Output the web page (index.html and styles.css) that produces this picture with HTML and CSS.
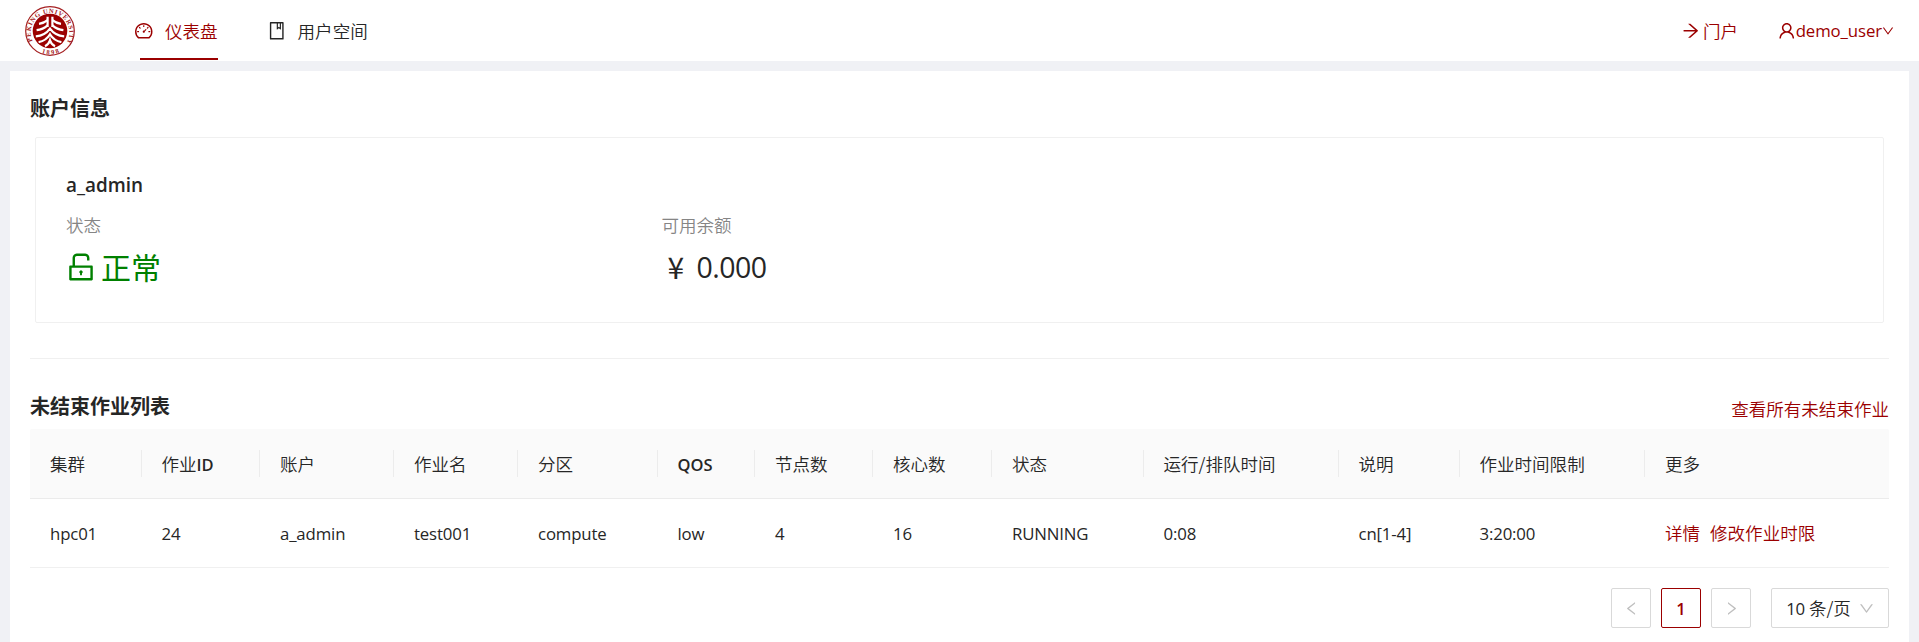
FILE: index.html
```html
<!DOCTYPE html>
<html lang="zh-CN">
<head>
<meta charset="utf-8">
<title>仪表盘</title>
<link rel="stylesheet" href="styles.css">
</head>
<body>
<header class="header">
  <svg class="logo" viewBox="0 0 50 50">
    <defs>
      <path id="ring-top" d="M7.5 35A19.4 19.4 0 1 1 42.5 35"/>
      <path id="ring-bottom" d="M13 45.2A23.6 23.6 0 0 0 37 45.2"/>
    </defs>
    <circle cx="25" cy="25" r="24.3" fill="#fff" stroke="#a52022" stroke-width="1.2"/>
    <circle cx="25" cy="25" r="17.3" fill="#9b0000"/>
    <text class="logo-text"><textPath href="#ring-top" textLength="80">PEKING UNIVERSITY</textPath></text>
    <text class="logo-text"><textPath href="#ring-bottom" startOffset="4" textLength="18">1898</textPath></text>
    <g fill="none" stroke="#fff" stroke-width="2.2">
      <path d="M22.6 10.8V21M27.4 10.8V21"/>
      <path d="M22.6 14.2Q19 17.2 14 17.8M22.6 19.4Q18 23.4 11.6 24.2M27.4 14.2Q31 17.2 36 17.8M27.4 19.4Q32 23.4 38.4 24.2"/>
      <path d="M10.8 30.4Q20 29.6 25 22.6Q30 29.6 39.2 30.4M13.6 36.2Q21.2 34.6 25 28.2Q28.8 34.6 36.4 36.2M20 40.2Q23.8 38.4 25 34.4Q26.2 38.4 30 40.2"/>
    </g>
  </svg>
  <nav class="nav">
    <a class="nav-item active"><svg class="icon" viewBox="64 64 896 896"><path d="M924.8 385.6a446.7 446.7 0 00-96-142.4 446.7 446.7 0 00-142.4-96C631.1 123.8 572.5 112 512 112s-119.1 11.8-174.4 35.2a446.7 446.7 0 00-142.4 96 446.7 446.7 0 00-96 142.4C75.8 440.9 64 499.5 64 560c0 132.7 58.3 257.7 159.9 343.1l1.7 1.4c5.8 4.8 13.1 7.5 20.6 7.5h531.7c7.5 0 14.8-2.7 20.6-7.5l1.7-1.4C901.7 817.7 960 692.7 960 560c0-60.5-11.9-119.1-35.2-174.4zM761.4 836H262.6A371.12 371.12 0 01140 560c0-99.4 38.7-192.8 109-263 70.3-70.3 163.7-109 263-109 99.4 0 192.8 38.7 263 109 70.3 70.3 109 163.7 109 263 0 105.6-44.5 205.5-122.6 276zM623.5 421.5a8.03 8.03 0 00-11.3 0L527.7 506c-18.7-5-39.4-.2-54.1 14.5a55.95 55.95 0 000 79.2 55.95 55.95 0 0079.2 0 55.87 55.87 0 0014.5-54.1l84.5-84.5c3.1-3.1 3.1-8.2 0-11.3l-28.3-28.3zM490 320h44c4.4 0 8-3.6 8-8v-80c0-4.4-3.6-8-8-8h-44c-4.4 0-8 3.6-8 8v80c0 4.4 3.6 8 8 8zm260 218v44c0 4.4 3.6 8 8 8h80c4.4 0 8-3.6 8-8v-44c0-4.4-3.6-8-8-8h-80c-4.4 0-8 3.6-8 8zm12.7-197.2l-31.1-31.1a8.03 8.03 0 00-11.3 0l-56.6 56.6a8.03 8.03 0 000 11.3l31.1 31.1c3.1 3.1 8.2 3.1 11.3 0l56.6-56.6c3.1-3.1 3.1-8.2 0-11.3zm-458.6-31.1a8.03 8.03 0 00-11.3 0l-31.1 31.1a8.03 8.03 0 000 11.3l56.6 56.6c3.1 3.1 8.2 3.1 11.3 0l31.1-31.1c3.1-3.1 3.1-8.2 0-11.3l-56.6-56.6zM262 530h-80c-4.4 0-8 3.6-8 8v44c0 4.4 3.6 8 8 8h80c4.4 0 8-3.6 8-8v-44c0-4.4-3.6-8-8-8z"/></svg><span>仪表盘</span></a>
    <a class="nav-item"><svg class="icon" viewBox="64 64 896 896"><path d="M832 64H192c-17.7 0-32 14.3-32 32v832c0 17.7 14.3 32 32 32h640c17.7 0 32-14.3 32-32V96c0-17.7-14.3-32-32-32zm-260 72h96v209.9L621.5 312 572 347.4V136zm220 752H232V136h280v296.9c0 3.3 1 6.6 3 9.3a15.9 15.9 0 0022.3 3.7l83.8-59.9 81.4 59.4c2.7 2 6 3.1 9.4 3.1 8.8 0 16-7.2 16-16V136h64v752z"/></svg><span>用户空间</span></a>
  </nav>
  <div class="header-right">
    <a class="portal"><svg class="icon" viewBox="64 64 896 896"><path d="M869 487.8L491.2 159.9c-2.9-2.5-6.6-3.9-10.5-3.9h-88.5c-7.4 0-10.8 9.2-5.2 14l350.2 304H152c-4.4 0-8 3.6-8 8v60c0 4.4 3.6 8 8 8h585.1L386.9 854c-5.6 4.9-2.2 14 5.2 14h91.5c1.9 0 3.8-.7 5.2-2L869 536.2a32.07 32.07 0 000-48.4z"/></svg><span>门户</span></a>
    <a class="user"><svg class="icon" viewBox="64 64 896 896"><path d="M858.5 763.6a374 374 0 00-80.6-119.5 375.63 375.63 0 00-119.5-80.6c-.4-.2-.8-.3-1.2-.5C719.5 518 760 444.7 760 362c0-137-111-248-248-248S264 225 264 362c0 82.7 40.5 156 102.8 201.1-.4.2-.8.3-1.2.5-44.8 18.9-85 46-119.5 80.6a375.63 375.63 0 00-80.6 119.5A371.7 371.7 0 00136 901.8a8 8 0 008 8.2h60c4.4 0 7.9-3.5 8-7.8 2-77.2 33-149.5 87.8-204.3 56.7-56.7 132-87.9 212.2-87.9s155.5 31.2 212.2 87.9C779 752.7 810 825 812 902.2c.1 4.4 3.6 7.8 8 7.8h60a8 8 0 008-8.2c-1-47.8-10.9-94.3-29.5-138.2zM512 534c-45.9 0-89.1-17.9-121.6-50.4S340 407.9 340 362c0-45.9 17.9-89.1 50.4-121.6S466.1 190 512 190s89.1 17.9 121.6 50.4S684 316.1 684 362c0 45.9-17.9 89.1-50.4 121.6S557.9 534 512 534z"/></svg><span class="user-name">demo_user</span><svg class="icon caret" viewBox="64 64 896 896"><path d="M884 256h-75c-5.1 0-9.9 2.5-12.9 6.6L512 654.2 227.9 262.6c-3-4.1-7.8-6.6-12.9-6.6h-75c-6.5 0-10.3 7.4-6.5 12.7l352.6 486.1c12.8 17.6 39 17.6 51.7 0l352.6-486.1c3.9-5.3.1-12.7-6.4-12.7z"/></svg></a>
  </div>
</header>
<main class="content">
  <h2 class="title">账户信息</h2>
  <section class="account-card">
    <h3 class="account-name">a_admin</h3>
    <div class="stats">
      <div class="stat">
        <div class="stat-label">状态</div>
        <div class="stat-value ok"><svg class="icon" viewBox="64 64 896 896"><path d="M832 464H332V240c0-30.9 25.1-56 56-56h248c30.9 0 56 25.1 56 56v68c0 4.4 3.6 8 8 8h56c4.4 0 8-3.6 8-8v-68c0-70.7-57.3-128-128-128H388c-70.7 0-128 57.3-128 128v224h-68c-17.7 0-32 14.3-32 32v384c0 17.7 14.3 32 32 32h640c17.7 0 32-14.3 32-32V496c0-17.7-14.3-32-32-32zm-40 376H232V536h560v304zM484 701v53c0 4.4 3.6 8 8 8h40c4.4 0 8-3.6 8-8v-53a48.01 48.01 0 10-56 0z"/></svg><span>正常</span></div>
      </div>
      <div class="stat">
        <div class="stat-label">可用余额</div>
        <div class="stat-value"><span class="yen">¥</span><span class="amount">0.000</span></div>
      </div>
    </div>
  </section>
  <hr class="divider">
  <div class="list-head">
    <h2 class="title">未结束作业列表</h2>
    <a class="link">查看所有未结束作业</a>
  </div>
  <div class="table">
    <div class="row head">
      <div class="cell">集群</div><div class="cell">作业<b>ID</b></div><div class="cell">账户</div><div class="cell">作业名</div><div class="cell">分区</div><div class="cell"><b>QOS</b></div><div class="cell">节点数</div><div class="cell">核心数</div><div class="cell">状态</div><div class="cell">运行/排队时间</div><div class="cell">说明</div><div class="cell">作业时间限制</div><div class="cell">更多</div>
    </div>
    <div class="row body">
      <div class="cell">hpc01</div><div class="cell">24</div><div class="cell">a_admin</div><div class="cell">test001</div><div class="cell">compute</div><div class="cell">low</div><div class="cell">4</div><div class="cell">16</div><div class="cell">RUNNING</div><div class="cell">0:08</div><div class="cell">cn[1-4]</div><div class="cell">3:20:00</div><div class="cell actions"><a class="link">详情</a><a class="link">修改作业时限</a></div>
    </div>
  </div>
  <div class="pagination">
    <div class="page-btn"><svg class="icon" viewBox="64 64 896 896"><path d="M724 218.3V141c0-6.7-7.7-10.4-12.9-6.3L260.3 486.8a31.86 31.86 0 000 50.3l450.8 352.1c5.3 4.1 12.9.4 12.9-6.3v-77.3c0-4.9-2.3-9.6-6.1-12.6l-360-281 360-281.1c3.8-3 6.1-7.7 6.1-12.6z"/></svg></div>
    <div class="page-btn current">1</div>
    <div class="page-btn"><svg class="icon" viewBox="64 64 896 896"><path d="M765.7 486.8L314.9 134.7A7.97 7.97 0 00302 141v77.3c0 4.9 2.3 9.6 6.1 12.6l360 281.1-360 281.1c-3.9 3-6.1 7.7-6.1 12.6V883c0 6.7 7.7 10.4 12.9 6.3l450.8-352.1a31.96 31.96 0 000-50.4z"/></svg></div>
    <div class="page-size"><span><span class="num">10</span> 条/页</span><svg class="icon" viewBox="64 64 896 896"><path d="M884 256h-75c-5.1 0-9.9 2.5-12.9 6.6L512 654.2 227.9 262.6c-3-4.1-7.8-6.6-12.9-6.6h-75c-6.5 0-10.3 7.4-6.5 12.7l352.6 486.1c12.8 17.6 39 17.6 51.7 0l352.6-486.1c3.9-5.3.1-12.7-6.4-12.7z"/></svg></div>
  </div>
</main>
</body>
</html>
```
FILE: styles.css
```css
* { box-sizing: border-box; }

body {
  margin: 0;
  height: 642px;
  overflow: hidden;
  display: flex;
  flex-direction: column;
  background: #f0f1f5;
  color: #262626;
  font: 350 17.55px/27.5px "Noto Sans CJK SC", sans-serif;
}

h2, h3 { margin: 0; }

.icon {
  width: 17.5px;
  height: 17.5px;
  fill: currentColor;
  flex: none;
}

.header {
  display: flex;
  flex: none;
  height: 61px;
  padding: 0 25px;
  background: #fff;
}

.logo { width: 50px; height: 50px; margin-top: 6px; }
.logo-text { font: 700 6.6px "Liberation Serif", serif; fill: #a52022; }

.nav { display: flex; margin-left: 60px; gap: 50px; }
.nav-item { display: flex; align-items: center; height: 61px; gap: 12.5px; padding-top: 1px; }
.nav-item.active {
  color: #9b0000;
  background: linear-gradient(#9b0000, #9b0000) 5px 58px / 100% 2px no-repeat;
}

.header-right {
  display: flex;
  margin-left: auto;
  gap: 40px;
  color: #9b0000;
  align-items: center;
}
.portal, .user { display: flex; align-items: center; }
.portal { gap: 4px; }
.user-name { padding-top: 1px; font-family: "Open Sans", sans-serif; font-weight: 400; font-size: 16.8px; letter-spacing: -0.1px; }
.caret { width: 12px; height: 12px; }

.content {
  flex: 1;
  margin: 10px 10px 0;
  padding: 22px 20px 0;
  background: #fff;
}

.title { font-size: 20px; line-height: 30px; font-weight: 700; }

.account-card {
  height: 186px;
  margin: 14px 5px 0;
  padding: 31px 30px 0;
  border: 1px solid #f0f0f0;
  border-radius: 2px;
}
.account-name { font: 600 18.9px/32px "Open Sans", sans-serif; }
.stats { display: flex; margin-top: 10px; }
.stat { width: 595.5px; }
.stat-label { color: #858585; }
.stat-value { display: flex; align-items: center; height: 48px; font-size: 30px; font-weight: 400; margin-top: 4px; }
.ok { color: #008000; gap: 5px; }
.ok .icon { width: 30px; height: 30px; }
.yen { margin-left: 6px; width: 29px; }
.amount { font-family: "Open Sans", sans-serif; font-size: 28.5px; letter-spacing: -0.5px; padding-top: 2px; }

.divider { height: 1px; margin: 35px 0 30px; border: 0; background: #f0f0f0; }

.list-head { display: flex; justify-content: space-between; height: 40px; padding-top: 2px; }
.list-head .link { margin-top: 4px; }
.link { color: #9b0000; }

.row {
  display: grid;
  grid-template-columns: 111.5px 118.5px 134px 124px 139.5px 97.5px 118px 119px 151.5px 195px 121px 185.5px 1fr;
  align-items: center;
  height: 69px;
  border-bottom: 1px solid #f0f0f0;
}
.head { height: 69.5px; background: #fafafa; border-radius: 2px 2px 0 0; border-color: #ebebeb; }
.cell { padding-left: 20px; white-space: nowrap; }
.head .cell { border-right: 1px solid #ececec; }
.head .cell:last-child { border-right: 0; }
.head b { font: 600 16.5px "Open Sans", sans-serif; }
.body .cell { padding-top: 2px; font-family: "Open Sans", sans-serif; font-size: 16.8px; font-weight: 400; letter-spacing: -0.15px; }
.body .actions { display: flex; gap: 10px; padding-top: 0; font: 350 17.55px "Noto Sans CJK SC", sans-serif; letter-spacing: 0; }

.pagination { display: flex; justify-content: flex-end; gap: 10px; margin-top: 20.5px; }
.page-btn, .page-size {
  display: flex;
  align-items: center;
  justify-content: center;
  width: 40px;
  height: 40px;
  border: 1px solid #d9d9d9;
  border-radius: 2px;
}
.page-btn .icon, .page-size .icon { width: 15px; height: 15px; color: #bfbfbf; }
.page-btn.current { padding-top: 1px; border-color: #9b0000; color: #9b0000; font: 600 16.5px "Open Sans", sans-serif; }
.page-size { width: 118px; margin-left: 10px; gap: 8px; }
.num { font: 400 16.8px "Open Sans", sans-serif; letter-spacing: -0.15px; }
```
